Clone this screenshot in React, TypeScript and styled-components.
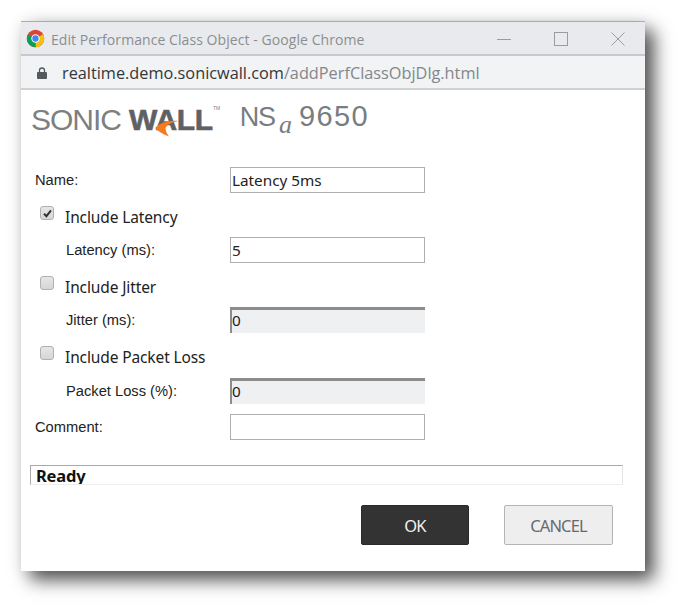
import React from "react";
import styled, { createGlobalStyle } from "styled-components";

const GlobalStyle = createGlobalStyle`
  html, body {
    margin: 0;
    padding: 0;
    background: #fff;
  }
`;

const Page = styled.div`
  width: 687px;
  height: 614px;
  padding: 21px 0 0 21px;
  box-sizing: border-box;
  overflow: hidden;
`;

const Window = styled.div`
  width: 624px;
  height: 550px;
  background: #fff;
  display: flex;
  flex-direction: column;
  box-shadow: 9px 9px 17px rgba(0, 0, 0, 0.68), 0 0 16px rgba(0, 0, 0, 0.07);
`;

const TitleBar = styled.div`
  height: 35px;
  box-sizing: border-box;
  background: #e8eaed;
  border-top: 1px solid #a9abad;
  border-bottom: 2px solid #c6c8ca;
  display: flex;
  align-items: center;
  padding: 1px 20px 0 5px;
  font: 14px "Open Sans", "Noto Sans", sans-serif;
  color: #8b8e91;
`;

const TitleText = styled.span`
  margin: 2px 0 0 6px;
  flex: 1;
  white-space: nowrap;
  letter-spacing: 0.07px;
`;

const WindowButtons = styled.div`
  display: flex;
  align-items: center;
  gap: 43px;
  color: #9a9da0;
`;

const AddressBar = styled.div`
  height: 34px;
  box-sizing: border-box;
  background: #f1f3f4;
  border-bottom: 2px solid #cfd0d2;
  display: flex;
  align-items: center;
  padding: 1px 0 0 16px;
  font: 16.3px "Open Sans", "Noto Sans", sans-serif;
  color: #83878b;
`;

const Host = styled.span`
  color: #33373b;
  margin-left: 15px;
`;

const Brand = styled.div`
  height: 77px;
  padding-left: 10px;
  display: flex;
  align-items: flex-start;
`;

const Logo = styled.div`
  position: relative;
  margin-top: 12px;
  font: 30px/36px "Liberation Sans", sans-serif;
  letter-spacing: -1px;
  color: #7d7f81;
  white-space: nowrap;
`;

const LogoBold = styled.span`
  margin-left: 8px;
  font-weight: 700;
  letter-spacing: -0.3px;
  color: #5f6163;
  -webkit-text-stroke: 0.6px #5f6163;
`;

const Swoosh = styled.svg`
  position: absolute;
  left: 124px;
  top: 18px;
`;

const Tm = styled.span`
  position: absolute;
  left: 182px;
  top: -12px;
  font-size: 5px;
  letter-spacing: 0;
`;

const Model = styled.div`
  margin: 8px 0 0 27px;
  display: flex;
  align-items: baseline;
  font: 29px/36px "Liberation Sans", sans-serif;
  letter-spacing: 1.4px;
  color: #787d81;
  white-space: nowrap;
`;

const ModelSeries = styled.span`
  font-size: 27px;
  letter-spacing: -1.2px;
`;

const Sub = styled.i`
  font: italic 26px "Liberation Serif", serif;
  letter-spacing: 0;
  position: relative;
  top: 7px;
  margin: 0 7px 0 4px;
`;

const Form = styled.div`
  padding: 0 0 0 14px;
  display: flex;
  flex-direction: column;
  font-family: "Noto Sans", "Open Sans", sans-serif;
  color: #222;
`;

const Row = styled.div<{ $top: number }>`
  height: 26px;
  margin-top: ${(p) => p.$top}px;
  display: flex;
  align-items: center;
`;

const Label = styled.label<{ $indented?: boolean }>`
  width: ${(p) => (p.$indented ? 164 : 195)}px;
  margin-left: ${(p) => (p.$indented ? 31 : 0)}px;
  font: 14.7px "Liberation Sans", sans-serif;
`;

const TextBox = styled.div<{ $disabled?: boolean }>`
  width: 195px;
  height: 26px;
  box-sizing: border-box;
  padding-left: 1px;
  display: flex;
  align-items: center;
  font-size: 15.3px;
  color: #222;
  background: ${(p) => (p.$disabled ? "#eff0f2" : "#fff")};
  border: 1px solid #aeaeae;
  ${(p) =>
    p.$disabled &&
    `border: 0;
     border-top: 3px solid #8c8c8c;
     border-left: 2px solid #8c8c8c;
     padding: 0 0 3px;`}
`;

const CheckRow = styled(Row)`
  padding-left: 5px;
  font-size: 15.5px;
  letter-spacing: -0.12px;
`;

const CheckBox = styled.span`
  width: 14px;
  height: 14px;
  margin: -8px 11px 0 0;
  border-radius: 3px;
  box-sizing: border-box;
  border: 1px solid #b0b0b0;
  background: linear-gradient(#e6e6e6, #d6d6d6);
  display: flex;
  align-items: center;
  justify-content: center;
`;

const Status = styled.div`
  height: 20px;
  margin: 25px 22px 0 9px;
  box-sizing: border-box;
  border-top: 1px solid #a8a8a8;
  border-left: 1px solid #a8a8a8;
  border-right: 1px solid #e6e6e6;
  border-bottom: 1px solid #eeeeee;
  padding-left: 5px;
  font: bold 16.5px/20px "Noto Sans", sans-serif;
  letter-spacing: -0.2px;
  color: #111;
  overflow: hidden;
`;

const Actions = styled.div`
  margin-top: 20px;
  padding-right: 32px;
  display: flex;
  justify-content: flex-end;
  gap: 35px;
`;

const Button = styled.div<{ $primary?: boolean }>`
  height: 40px;
  width: ${(p) => (p.$primary ? 108 : 109)}px;
  box-sizing: border-box;
  border-radius: 2px;
  display: flex;
  align-items: center;
  justify-content: center;
  font: 16.5px "Noto Sans", sans-serif;
  letter-spacing: -0.9px;
  color: ${(p) => (p.$primary ? "#f2f2f2" : "#666a6e")};
  background: ${(p) => (p.$primary ? "#333333" : "#eeeeee")};
  border: 1px solid ${(p) => (p.$primary ? "#2a2a2a" : "#b4b4b4")};
`;

const ChromeIcon = () => (
  <svg width="19" height="19" viewBox="0 0 48 48">
    <circle cx="24" cy="24" r="22" fill="#db4437" />
    <path d="M24 24 L43 13 A22 22 0 0 1 24 46 Z" fill="#f4c20d" />
    <path d="M24 24 L24 46 A22 22 0 0 1 5 13 Z" fill="#0f9d58" />
    <circle cx="24" cy="24" r="10.5" fill="#fff" />
    <circle cx="24" cy="24" r="8" fill="#4285f4" />
  </svg>
);

const Check = () => (
  <svg width="9" height="9" viewBox="0 0 9 9">
    <path d="M1 4.8 L3.4 7.2 L8 1.4" fill="none" stroke="#333" strokeWidth="2" />
  </svg>
);

export default function App() {
  return (
    <Page>
      <GlobalStyle />
      <Window>
        <TitleBar>
          <ChromeIcon />
          <TitleText>Edit Performance Class Object - Google Chrome</TitleText>
          <WindowButtons>
            <svg width="14" height="14" viewBox="0 0 14 14">
              <path d="M0 7.5H14" stroke="currentColor" />
            </svg>
            <svg width="14" height="14" viewBox="0 0 14 14">
              <rect x="0.5" y="0.5" width="13" height="13" fill="none" stroke="currentColor" />
            </svg>
            <svg width="14" height="14" viewBox="0 0 14 14">
              <path d="M0.5 0.5L13.5 13.5M13.5 0.5L0.5 13.5" stroke="currentColor" />
            </svg>
          </WindowButtons>
        </TitleBar>
        <AddressBar>
          <svg width="10" height="12" viewBox="0 0 10 12">
            <path d="M2.5 5V3.5a2.5 2.5 0 0 1 5 0V5" fill="none" stroke="#55585c" strokeWidth="1.3" />
            <rect x="0" y="5" width="10" height="7" rx="1" fill="#55585c" />
          </svg>
          <Host>realtime.demo.sonicwall.com</Host>
          /addPerfClassObjDlg.html
        </AddressBar>
        <Brand>
          <Logo>
            SONIC<LogoBold>WALL</LogoBold>
            <Swoosh width="24" height="17" viewBox="0 0 24 17">
              <path d="M0 8C5 3 13 0 23.5 1C17 2 12.5 4.5 10.5 8C10.5 11 12 14 14 16.5C8 14.5 3.5 11.5 0 8Z" fill="#f47b20" />
            </Swoosh>
            <Tm>TM</Tm>
          </Logo>
          <Model>
            <ModelSeries>NS</ModelSeries>
            <Sub>a</Sub>
            9650
          </Model>
        </Brand>
        <Form>
          <Row $top={0}>
            <Label>Name:</Label>
            <TextBox>Latency 5ms</TextBox>
          </Row>
          <CheckRow $top={11}>
            <CheckBox>
              <Check />
            </CheckBox>
            Include Latency
          </CheckRow>
          <Row $top={7}>
            <Label $indented>Latency (ms):</Label>
            <TextBox>5</TextBox>
          </Row>
          <CheckRow $top={11}>
            <CheckBox />
            Include Jitter
          </CheckRow>
          <Row $top={7}>
            <Label $indented>Jitter (ms):</Label>
            <TextBox $disabled>0</TextBox>
          </Row>
          <CheckRow $top={11}>
            <CheckBox />
            Include Packet Loss
          </CheckRow>
          <Row $top={8}>
            <Label $indented>Packet Loss (%):</Label>
            <TextBox $disabled>0</TextBox>
          </Row>
          <Row $top={10}>
            <Label>Comment:</Label>
            <TextBox />
          </Row>
        </Form>
        <Status>Ready</Status>
        <Actions>
          <Button $primary>OK</Button>
          <Button>CANCEL</Button>
        </Actions>
      </Window>
    </Page>
  );
}
